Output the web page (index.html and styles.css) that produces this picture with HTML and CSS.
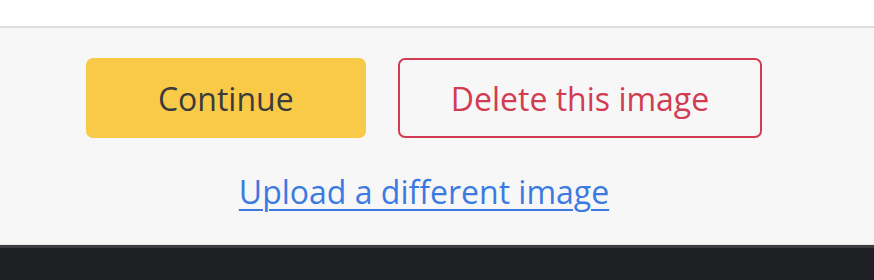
FILE: index.html
```html
<!DOCTYPE html>
<html lang="en">
<head>
    <meta charset="UTF-8">
    <meta name="viewport" content="width=device-width, initial-scale=1.0">
    <title>Image actions</title>
    <link rel="stylesheet" href="styles.css">
</head>
<body>
    <div class="topbar"></div>
    <div class="actions">
        <div class="buttons">
            <a href="javascript:;" class="btn btn-continue">Continue</a>
            <a href="javascript:;" class="btn btn-delete">Delete this image</a>
        </div>
        <a href="javascript:;" class="upload">Upload a different image</a>
    </div>
    <div class="footer"></div>
</body>
</html>
```

FILE: styles.css
```css
* {
    margin: 0;
    padding: 0;
    box-sizing: border-box;
}
body {
    font-family: "Open Sans", "Noto Sans", sans-serif;
    background: #1e2024;
}
.topbar {
    height: 28px;
    background: #fff;
    border-bottom: 2px solid #dedede;
}
.actions {
    height: 217px;
    background: #f7f7f7;
    border-bottom: 1px solid #e8e8e8;
    padding: 30px 26px 0 0;
    display: flex;
    flex-direction: column;
    align-items: center;
}
.buttons {
    display: flex;
    gap: 32px;
}
.btn {
    display: flex;
    align-items: center;
    justify-content: center;
    min-width: 280px;
    height: 80px;
    padding: 0 51px;
    border-radius: 7px;
    font-size: 32px;
    text-decoration: none;
}
.btn-continue {
    background: #f9ca47;
    color: #3b3b3b;
}
.btn-delete {
    border: 2px solid #d23c53;
    color: #d23c53;
}
.upload {
    margin-top: 32px;
    font-size: 32px;
    line-height: 44px;
    color: #3b7be1;
    text-decoration: underline;
    text-decoration-thickness: 2px;
    text-underline-offset: 5px;
}
.footer {
    height: 35px;
    border-top: 3px solid #3a3c40;
    background: #1e2024;
}
```
